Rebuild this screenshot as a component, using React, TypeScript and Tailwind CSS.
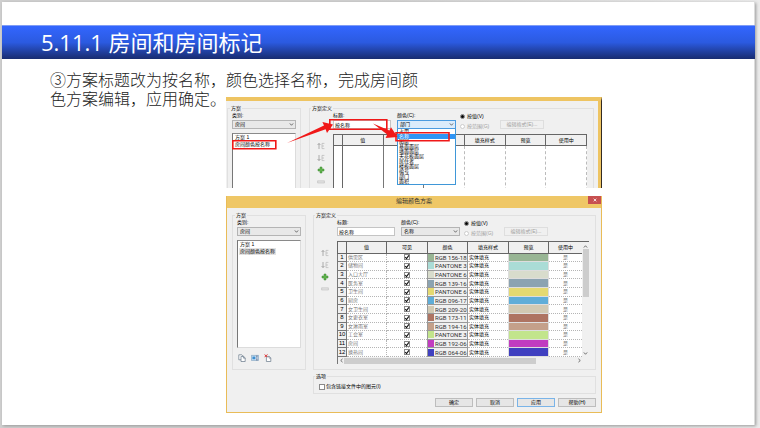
import type { ReactNode } from "react";

const cjk = "font-['Liberation_Sans','Noto_Sans_CJK_SC',sans-serif]";

type Room = { name: string; color: string; code: string };

const rooms: Room[] = [
  { name: "供需区", color: "#98b594", code: "RGB 156-18" },
  { name: "储物间", color: "#aadcd6", code: "PANTONE 3" },
  { name: "入口大厅", color: "#d8dccc", code: "PANTONE 6" },
  { name: "医务室", color: "#8ba3b1", code: "RGB 139-16" },
  { name: "卫生间", color: "#e4d971", code: "PANTONE 6" },
  { name: "厨房", color: "#5fadd8", code: "RGB 096-17" },
  { name: "女卫生间", color: "#d1c9b3", code: "RGB 209-20" },
  { name: "女更衣室", color: "#ae7462", code: "RGB 173-11" },
  { name: "女淋雨室", color: "#c4a08a", code: "RGB 194-16" },
  { name: "工会室", color: "#c2e58c", code: "PANTONE 3" },
  { name: "房间", color: "#c13cc0", code: "RGB 192-06" },
  { name: "换热间", color: "#4040c0", code: "RGB 064-06" },
];

const parameters = [
  "占用",
  "名称",
  "图层",
  "基面面层",
  "墙面面层",
  "天花板面层",
  "居住者",
  "楼板面层",
  "编号",
  "部门",
  "面积",
];

function Chevron({ className = "" }: { className?: string }) {
  return (
    <svg viewBox="0 0 6 4" className={`h-[3px] w-[5px] ${className}`} fill="none" stroke="#555" strokeWidth="1.1" aria-hidden="true">
      <path d="M.8 .6 3 3 5.2 .6" />
    </svg>
  );
}

function Select({ id, label, value, active = false }: { id: string; label: string; value: string; active?: boolean }) {
  return (
    <div className="flex w-full flex-col gap-px">
      <label htmlFor={id} className="h-[7px]">{label}</label>
      <div className="grid items-center">
        <select
          id={id}
          defaultValue={value}
          className={`col-start-1 row-start-1 h-[9px] w-full appearance-none border px-[2px] text-[5px] leading-[7px] text-black outline-none ${
            active ? "border-[#4b9be0] bg-[#dcecfb]" : "border-[#b4b4b4] bg-[#e8e8e8]"
          }`}
        >
          <option>{value}</option>
        </select>
        <Chevron className="pointer-events-none col-start-1 row-start-1 mr-[2px] justify-self-end" />
      </div>
    </div>
  );
}

function Group({ title, className = "", children }: { title: string; className?: string; children?: ReactNode }) {
  return (
    <section className={`flex flex-col border border-[#e0e0e0] ${className}`}>
      <h3 className="-mt-[4px] -ml-[2px] h-[7px] self-start bg-[#f0f0f0] px-px">{title}</h3>
      {children}
    </section>
  );
}

function Tick({ id, label, checked = false }: { id: string; label?: string; checked?: boolean }) {
  return (
    <span className="grid size-[6px] place-items-center">
      <input id={id} type="checkbox" aria-label={label} defaultChecked={checked} className="peer col-start-1 row-start-1 size-[6px] appearance-none border border-[#8a8a8a] bg-white" />
      <svg viewBox="0 0 6 6" className="pointer-events-none invisible col-start-1 row-start-1 size-[6px] peer-checked:visible" fill="none" stroke="#111" strokeWidth="1.1" aria-hidden="true">
        <path d="M1.2 3 2.5 4.5 4.9 1.3" />
      </svg>
    </span>
  );
}

function Radio({ id, name, label, checked = false, disabled = false }: { id: string; name: string; label: string; checked?: boolean; disabled?: boolean }) {
  return (
    <div className="flex h-[8px] items-center gap-[2px]">
      <input
        id={id}
        type="radio"
        name={name}
        defaultChecked={checked}
        disabled={disabled}
        className="grid size-[5px] shrink-0 appearance-none place-items-center rounded-full border border-[#777] bg-white before:size-[3px] before:rounded-full checked:before:bg-black disabled:border-[#ccc]"
      />
      <label htmlFor={id} className={`whitespace-nowrap ${disabled ? "text-[#a0a0a0]" : ""}`}>{label}</label>
    </div>
  );
}

function MoveIcon({ up = false }: { up?: boolean }) {
  return (
    <svg viewBox="0 0 8 8" className="size-[8px]" fill="none" stroke="#999" strokeWidth=".8" aria-hidden="true">
      {up ? <path d="M2 7V1.6M.6 3 2 1.4 3.4 3" /> : <path d="M2 1v5.4M.6 5 2 6.6 3.4 5" />}
      <path d="M7.4 1.4H5v5.2h2.4M5 4h2" stroke="#bbb" />
    </svg>
  );
}

function RowTools() {
  return (
    <div className="flex w-[20px] shrink-0 flex-col items-center gap-[4px] pt-[8px] pr-[4px]">
      <button type="button" aria-label="上移" className="size-[8px]"><MoveIcon up /></button>
      <button type="button" aria-label="下移" className="size-[8px]"><MoveIcon /></button>
      <button type="button" aria-label="添加" className="size-[8px]">
        <svg viewBox="0 0 8 8" className="size-[8px]" aria-hidden="true">
          <path d="M3 1h2v2h2v2H5v2H3V5H1V3h2z" fill="#5fb24c" stroke="#3f8a33" strokeWidth=".5" />
        </svg>
      </button>
      <button type="button" aria-label="删除" className="size-[8px]">
        <svg viewBox="0 0 8 8" className="size-[8px]" aria-hidden="true">
          <path d="M.6 2.8h6.8v2.2H.6z" fill="#e2e2e2" stroke="#b5b5b5" strokeWidth=".5" />
        </svg>
      </button>
    </div>
  );
}

function SchemeList({ selectedShade = "", className = "" }: { selectedShade?: string; className?: string }) {
  return (
    <ul className={`mt-[4px] border border-[#dcdcdc] border-t-[#8a8a8a] border-l-[#777] bg-white px-px leading-[7px] ${className}`}>
      <li className="px-px">方案 1</li>
      <li className={`w-fit px-px whitespace-nowrap ${selectedShade}`}>房间颜色按名称</li>
    </ul>
  );
}

function DefinitionFields({ prefix, color, open = false }: { prefix: string; color: string; open?: boolean }) {
  return (
    <div className="flex pl-[20px]">
      <div className="flex w-[58px] flex-col gap-px">
        <label htmlFor={`${prefix}-title`} className="h-[7px]">标题:</label>
        <input id={`${prefix}-title`} defaultValue="按名称" className="h-[9px] w-full border border-[#c4c4c4] bg-white px-px text-[5px] leading-[7px] text-black outline-none" />
      </div>
      <div className="relative ml-[6px] w-[59px]">
        <Select id={`${prefix}-color`} label="颜色(C):" value={color} active={open} />
        {open && (
          <ul className="absolute top-[17px] left-0 z-10 w-full border border-t-0 border-[#3f97d8] bg-white">
            {parameters.map((p) => (
              <li key={p} className={`h-[5px] pl-px leading-[5px] ${p === "名称" ? "bg-[#2f95f5] text-white" : ""}`}>{p}</li>
            ))}
          </ul>
        )}
      </div>
      <div className="ml-[4px] flex w-[40px] flex-col gap-[2px]">
        <Radio id={`${prefix}-value`} name={`${prefix}-mode`} label="按值(V)" checked />
        <Radio id={`${prefix}-range`} name={`${prefix}-mode`} label="按范围(G)" disabled />
      </div>
      <button type="button" disabled className="mt-[8px] h-[9px] w-[44px] border border-[#dedede] text-[#a0a0a0]">编辑格式(E)...</button>
    </div>
  );
}

const head = "h-[11px] border border-[#666] bg-[#f0f0f0] p-0 text-center font-normal";
const cell = "border-r border-b border-dotted border-[#b5b5b5] p-0";

function EmptyTable() {
  return (
    <table className="h-[67px] w-full table-fixed border-collapse">
      <colgroup>
        <col className="w-[9px]" />
        <col /><col /><col /><col /><col /><col />
      </colgroup>
      <thead>
        <tr>
          {["", "值", "可见", "颜色", "填充样式", "预览", "使用中"].map((h) => (
            <th key={h} className={head}>{h}</th>
          ))}
        </tr>
      </thead>
      <tbody>
        <tr className="bg-white">
          <td className="border-r border-l border-[#666]" />
          <td className="border-r border-[#777]" />
          <td className="border-r border-[#777]" />
          <td className="border-r border-dashed border-[#bbb]" />
          <td className="border-r border-dashed border-[#bbb]" />
          <td className="border-r border-dashed border-[#bbb]" />
          <td className="border-r border-dashed border-[#bbb]" />
        </tr>
      </tbody>
    </table>
  );
}

function RoomTable() {
  return (
    <div className="min-w-0 flex-1">
      <div className="flex border-t border-[#666]">
        <table className="h-[115px] flex-1 table-fixed border-collapse bg-white">
          <colgroup>
            <col className="w-[9px]" />
            <col className="w-[40px]" />
            <col className="w-[41px]" />
            <col className="w-[40px]" />
            <col className="w-[41px]" />
            <col className="w-[40px]" />
            <col />
          </colgroup>
          <thead>
            <tr>
              {["", "值", "可见", "颜色", "填充样式", "预览", "使用中"].map((h) => (
                <th key={h} className={`${head} border-t-0 ${h === "使用中" ? "border-r-0" : ""}`}>{h}</th>
              ))}
            </tr>
          </thead>
          <tbody>
            {rooms.map((r, i) => (
              <tr key={r.name}>
                <td className="border border-[#777] bg-[#f0f0f0] p-0 text-center text-[6px]">{i + 1}</td>
                <td className={`${cell} pl-px text-[#777]`}>{r.name}</td>
                <td className={cell}>
                  <div className="flex justify-center"><Tick id={`visible-${i}`} label={`${r.name} 可见`} checked /></div>
                </td>
                <td className="border border-[#999] bg-[#f0f0f0] p-0">
                  <div className="flex items-center gap-px">
                    <span className="h-[7px] w-[6px] shrink-0" style={{ backgroundColor: r.color }} />
                    <span className="w-0 flex-1 font-['Roboto',sans-serif] text-[6px] whitespace-nowrap text-[#333]">{r.code}</span>
                  </div>
                </td>
                <td className={`${cell} pl-px`}>实体填充</td>
                <td className="border border-[#ddd] p-0" style={{ backgroundColor: r.color }} />
                <td className={`${cell} border-r-0 text-center text-[#777]`}>是</td>
              </tr>
            ))}
          </tbody>
        </table>
        <div className="flex w-[7px] flex-col items-center bg-[#f0f0f0] pb-[2px]">
          <Chevron className="mt-[3px] rotate-180" />
          <span className="mt-px h-[48px] w-[6px] bg-[#cdcdcd]" />
          <Chevron className="mt-auto" />
        </div>
      </div>
      <div className="flex h-[7px] items-center border-l border-[#777] pr-[7px]">
        <Chevron className="ml-px rotate-90" />
        <span className="h-[6px] w-[192px] bg-[#cdcdcd]" />
        <Chevron className="ml-auto -rotate-90" />
      </div>
    </div>
  );
}

function ListTools() {
  return (
    <div className="mt-[6px] flex gap-[5px] pl-px">
      <button type="button" aria-label="复制" className="size-[8px]">
        <svg viewBox="0 0 8 8" className="size-[8px]" fill="#fff" stroke="#667788" strokeWidth=".7" aria-hidden="true">
          <path d="M.8 .8h3l1 1v4H.8z" />
          <path d="M3 2.4h2.6l1.6 1.5v3.6H3z" />
          <path d="M5.4 2.5v1.6h1.8" fill="none" />
        </svg>
      </button>
      <button type="button" aria-label="重命名" className="size-[8px]">
        <svg viewBox="0 0 8 8" className="size-[8px]" aria-hidden="true">
          <path d="M.4 1.4h7.2v5H.4z" fill="#d8ebfa" stroke="#6b93b5" strokeWidth=".6" />
          <path d="M1.4 2.5h3v2.8h-3z" fill="#3e8ed0" />
          <path d="M5.9 2v4M5.2 2h1.4M5.2 6h1.4" stroke="#335" strokeWidth=".5" />
        </svg>
      </button>
      <button type="button" aria-label="删除方案" className="size-[8px]">
        <svg viewBox="0 0 8 8" className="size-[8px]" fill="none" aria-hidden="true">
          <path d="M2.4 2.4h2.8l1.6 1.5v3.6H2.4z" fill="#fff" stroke="#667788" strokeWidth=".7" />
          <path d="M5 2.5v1.6h1.8" stroke="#667788" strokeWidth=".6" />
          <path d="M.6 .6 3.4 3M3.4 .4 .6 3.2" stroke="#d33" strokeWidth="1" />
        </svg>
      </button>
    </div>
  );
}

function RedMarks() {
  return (
    <svg viewBox="0 0 376 91" className="pointer-events-none absolute top-0 left-0 z-20 h-[91px] w-[376px]" aria-hidden="true">
      <g fill="none" stroke="#f01818" strokeWidth="1.6">
        <path d="M6.8 43.8h43v8h-43z" />
        <path d="M103.8 22.8h57v9.4h-57z" />
        <path d="M170 35.8h53v8h-53z" />
      </g>
      <g fill="#f01818">
        <path d="M61 46 98 28.6 96.4 25 107 27.4 101 36 99.6 32.2z" />
        <path d="M147 26.6 163.4 33.6 165 30.2 171.5 40 159.6 41 161.2 37.4z" />
      </g>
    </svg>
  );
}

function DropdownStep() {
  return (
    <figure className="relative h-[91px] overflow-hidden border-t-4 border-r border-[#eec462] border-r-[#332b22] bg-[#f0f0f0]">
      <div className="flex h-full gap-[8px] border-r-[3px] border-[#eec462] pt-[7px] pr-[4px] pl-px">
        <Group title="方案" className="h-[160px] w-[74px] shrink-0 px-[4px]">
          <Select id="step-category" label="类别:" value="房间" />
          <SchemeList className="h-[108px]" />
        </Group>
        <Group title="方案定义" className="h-[160px] min-w-0 flex-1 pr-[6px] pl-[3px]">
          <DefinitionFields prefix="step" color="部门" open />
          <div className="mt-[4px] flex">
            <RowTools />
            <EmptyTable />
          </div>
        </Group>
      </div>
      <div className="absolute -top-[4px] left-0"><RedMarks /></div>
    </figure>
  );
}

const action = "h-[9px] w-[38px] border bg-[#e6e6e6]";

function SchemeDialog() {
  return (
    <div role="dialog" aria-label="编辑颜色方案" className="mt-[8px] border border-t-0 border-[#e9bc58] bg-[#f0f0f0]">
      <header className="grid h-[12px] grid-cols-[13px_1fr_13px] bg-[#efc766]">
        <h2 className="col-start-2 text-center text-[6px] leading-[11px] text-[#333]">编辑颜色方案</h2>
        <button type="button" aria-label="关闭" className="grid h-[8px] place-items-center bg-[#c75050]">
          <svg viewBox="0 0 6 6" className="size-[4px]" stroke="#fff" strokeWidth="1.2" aria-hidden="true"><path d="M1 1l4 4M5 1 1 5" /></svg>
        </button>
      </header>
      <div className="flex flex-col pt-[7px] pr-[5px] pb-[5px] pl-[5px]">
        <div className="flex gap-[7px]">
          <Group title="方案" className="h-[155px] w-[74px] shrink-0 px-[4px]">
            <Select id="dialog-category" label="类别:" value="房间" />
            <SchemeList selectedShade="bg-[#e2e2e2]" className="h-[108px]" />
            <ListTools />
          </Group>
          <Group title="方案定义" className="h-[155px] min-w-0 flex-1 pr-[6px] pl-[3px]">
            <DefinitionFields prefix="dialog" color="名称" />
            <div className="mt-[4px] flex">
              <RowTools />
              <RoomTable />
            </div>
          </Group>
        </div>
        <Group title="选项" className="mt-[6px] ml-[81px] h-[18px] pl-[3px]">
          <div className="mt-[3px] flex items-center gap-px pl-[2px]">
            <Tick id="linked" />
            <label htmlFor="linked">包含链接文件中的图元(I)</label>
          </div>
        </Group>
        <div className="mt-[4px] flex justify-end gap-[3px]">
          <button type="button" className={`${action} border-[#bdbdbd]`}>确定</button>
          <button type="button" className={`${action} border-[#bdbdbd]`}>取消</button>
          <button type="button" className={`${action} border-[#7ab4e8]`}>应用</button>
          <button type="button" className={`${action} border-[#bdbdbd]`}>帮助(H)</button>
        </div>
      </div>
    </div>
  );
}

export default function App() {
  return (
    <div className="flex min-h-screen bg-[linear-gradient(to_right,#d0d0d0,#d0d0d0_50%,#ebebeb)] pt-[2px] pr-[5px] pb-[3px] pl-[2px]">
      <main className="flex-1 border-r border-[#dcdcdc] bg-white pt-[23px] shadow-[1px_1px_3px_#999]">
        <h1 className="-mr-px h-[34px] border-t border-[#7f9cf5] bg-linear-to-b from-[#3366ff] via-[#2b5ae0] to-[#182c70] pl-[39px] font-['Open_Sans','Noto_Sans_CJK_SC',sans-serif] text-[22px] leading-[32px] font-normal text-white">
          5.11.1 房间和房间标记
        </h1>
        <p className="pt-[11px] pl-[48px] font-['Noto_Sans_CJK_SC',sans-serif] text-[16px] leading-[19px] font-light text-[#222]">
          ③方案标题改为按名称，颜色选择名称，完成房间颜
          <br />
          色方案编辑，应用确定。
        </p>
        <div className={`-mt-[11px] ml-[224px] w-1/2 text-[5px] leading-[7px] text-black ${cjk}`}>
          <DropdownStep />
          <SchemeDialog />
        </div>
      </main>
    </div>
  );
}
